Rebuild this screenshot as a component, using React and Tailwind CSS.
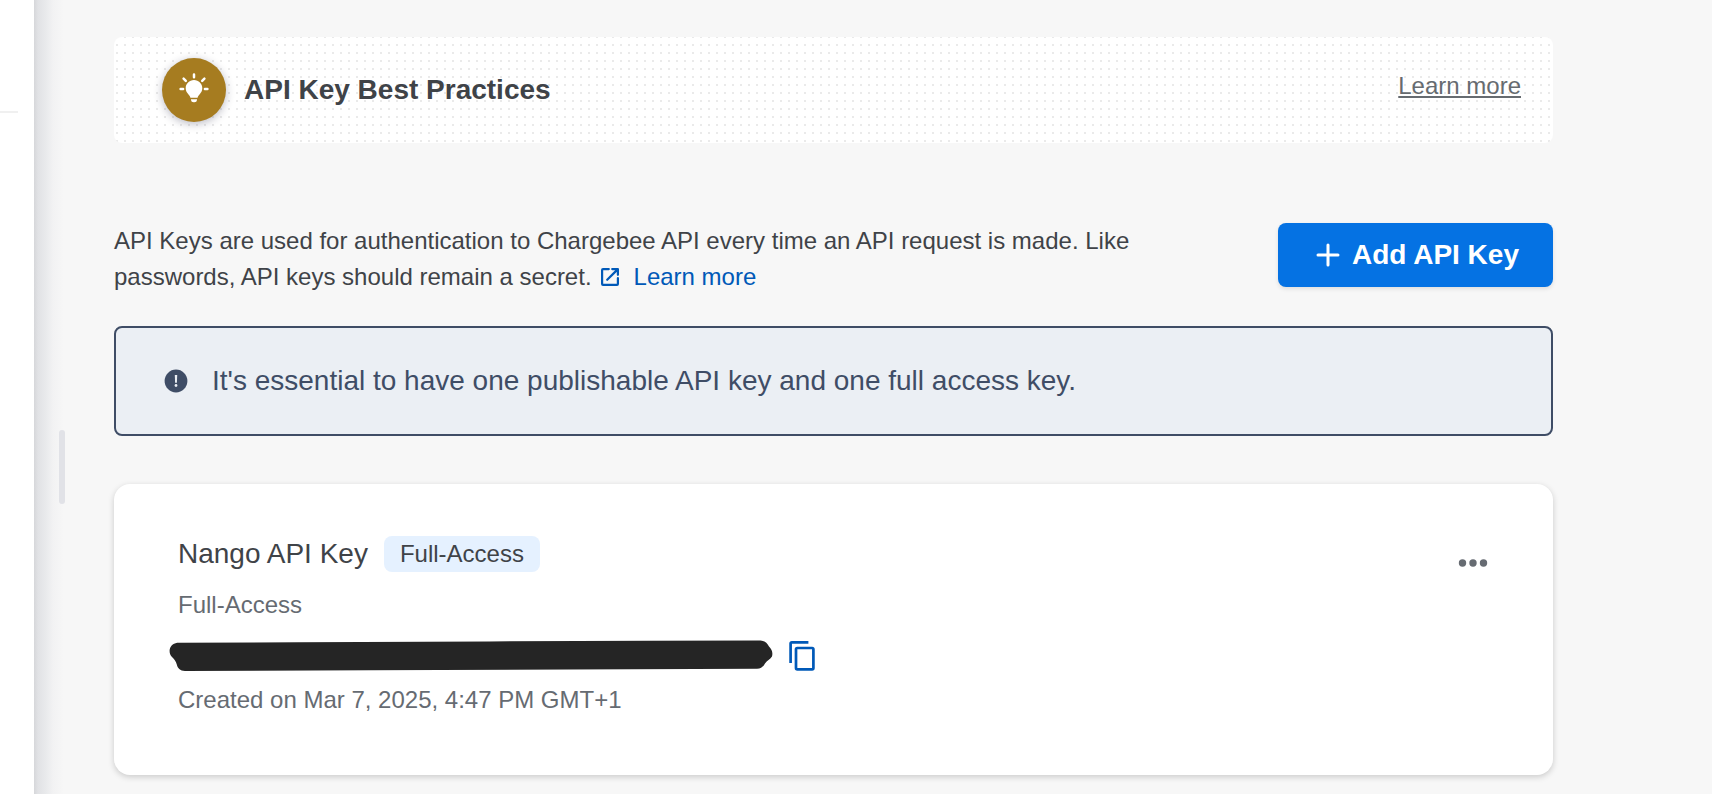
import React from "react";

function BulbIcon() {
  return (
    <svg viewBox="0 0 32 32" className="size-8" aria-hidden="true">
      <g stroke="#fff" strokeWidth="2.5" strokeLinecap="round">
        <path d="M16 2.600v2.600M2.600 17h2.500M26.900 17h2.500M5.600 6.600l2.200 2.200M26.400 6.600l-2.200 2.200" />
      </g>
      <path
        fill="#fff"
        d="M16 8c-4.700 0-8.300 3.700-8.300 8.300 0 2.600 1.200 4.500 2.800 6.100.9.9 1.600 1.900 1.900 3.400h7.200c.3-1.500 1-2.500 1.900-3.400 1.600-1.600 2.800-3.500 2.800-6.100C24.300 11.700 20.700 8 16 8z"
      />
      <path fill="#fff" d="M13 27.200h6v.7a2.600 2.600 0 0 1-2.600 2.400h-.8a2.600 2.600 0 0 1-2.600-2.400z" />
    </svg>
  );
}

function PlusIcon() {
  return (
    <svg viewBox="0 0 32 32" className="size-8" aria-hidden="true">
      <path d="M16 6v20M6 16h20" stroke="#fff" strokeWidth="3" strokeLinecap="round" />
    </svg>
  );
}

function OpenInNewIcon() {
  return (
    <svg
      viewBox="0 0 24 24"
      className="size-6"
      fill="none"
      stroke="currentColor"
      strokeWidth="2.2"
      strokeLinecap="round"
      strokeLinejoin="round"
      aria-hidden="true"
    >
      <path d="M10.800 4.100H5a.9.9 0 0 0-.9.9v14c0 .5.4.9.9.9h14c.5 0 .9-.4.9-.9v-5.800" />
      <path d="M14.200 4.100h5.700v5.700M19.400 4.600 9.200 14.800" />
    </svg>
  );
}

function AlertIcon() {
  return (
    <svg viewBox="0 0 24 24" className="size-6" aria-hidden="true">
      <circle cx="12" cy="12" r="11.400" fill="#3f4d66" />
      <path d="M10.800 6h2.400l-.3 7.700h-1.800z" fill="#ebeff4" />
      <circle cx="12" cy="16.500" r="1.400" fill="#ebeff4" />
    </svg>
  );
}

function CopyIcon() {
  return (
    <svg viewBox="0 0 32 32" className="size-8" fill="none" stroke="currentColor" strokeWidth="2.700" aria-hidden="true">
      <path d="M4.600 23V3.600c0-.8.500-1.300 1.300-1.300h16.500" />
      <rect x="10" y="8" width="17.400" height="21.400" rx="1.300" />
    </svg>
  );
}

function RedactedKey() {
  return (
    <svg viewBox="0 0 604 32" className="h-8 w-[604px]" role="img" aria-label="Hidden API key">
      <path
        d="M10 2.800 L130 2.300 L320 1.400 L480 .7 L590 .4 C596 .6 598 2.500 600 6.500 C603 9.500 604 12.500 603 16.500 C601 19.500 598 20.500 596 23.500 C594 27 592 28.600 588 28.800 L400 29.600 L200 30.300 L16 31 C11 31 8.500 28 7.800 24.500 C7 21 5 19 3 17 C1 15 .3 12.500 .7 9.500 C1.500 5.500 5 2.800 10 2.800z"
        fill="#252525"
      />
    </svg>
  );
}

export default function App() {
  return (
    <div className="flex min-h-screen bg-[#f7f7f7] font-['Liberation_Sans',Arial,sans-serif] text-2xl text-[#3f4348]">
      <aside className="w-[34px] shrink-0 bg-white pt-[111px]">
        <hr className="w-[18px] border-t-2 border-[#f0f0f0]" />
      </aside>
      <div className="w-20 shrink-0 bg-[linear-gradient(to_right,#d6d7da_0px,#e1e2e5_4px,#e9eaec_12px,#f2f2f3_19px,#f7f7f7_30px)] pt-[430px] pl-[25px]">
        <div className="h-[74px] w-1.5 rounded-sm bg-[#e1e2e7]" />
      </div>

      <main className="min-w-0 flex-1 pt-[37px] pr-[159px] pb-[19px]">
        <section className="flex items-center justify-between rounded-lg bg-white bg-[conic-gradient(from_270deg_at_2px_2px,#eaeaea_90deg,transparent_0)] bg-[length:8px_8px] bg-[position:2px_-1px] py-[21px] pr-8 pl-12">
          <div className="flex items-center gap-[18px]">
            <span className="flex size-16 items-center justify-center rounded-full bg-[#a67c20] pb-1 shadow-[0_2px_8px_rgba(30,30,60,0.3)]">
              <BulbIcon />
            </span>
            <h2 className="text-[28px] leading-8 font-bold">API Key Best Practices</h2>
          </div>
          <a href="#best-practices" className="pb-2 leading-8 text-[#666b70] underline">
            Learn more
          </a>
        </section>

        <section className="mt-20 flex items-start justify-between">
          <p className="max-w-[1040px] leading-9">
            API Keys are used for authentication to Chargebee API every time an API request is made. Like passwords, API
            keys should remain a secret.
            <a href="#api-keys" className="ml-1.5 inline-flex items-center gap-3 align-top text-[#0059b8]">
              <OpenInNewIcon />
              Learn more
            </a>
          </p>
          <button
            type="button"
            className="flex h-16 shrink-0 items-center gap-2 rounded-lg bg-[#0572e3] px-[34px] text-[28px] font-bold text-white shadow-[0_2px_4px_rgba(0,0,0,0.1)]"
          >
            <PlusIcon />
            Add API Key
          </button>
        </section>

        <div
          role="alert"
          className="mt-[31px] flex items-center gap-6 rounded-lg border-2 border-[#3f4d66] bg-[#ebeff4] px-12 py-9 text-[28px] leading-[34px] text-[#3f4d66]"
        >
          <AlertIcon />
          <p>It's essential to have one publishable API key and one full access key.</p>
        </div>

        <article className="mt-12 flex items-start justify-between rounded-2xl bg-white pt-[52px] pr-16 pb-[59px] pl-16 shadow-[0_2px_6px_rgba(0,0,0,0.18)]">
          <div className="text-[#666b72]">
            <div className="flex items-center gap-4 text-[#3f4348]">
              <h3 className="text-[28px] leading-9">Nango API Key</h3>
              <span className="rounded-lg bg-[#e5f1ff] px-4 leading-9">Full-Access</span>
            </div>
            <p className="mt-4 leading-[34px]">Full-Access</p>
            <div className="mt-[18px] -ml-[9px] flex items-center gap-[13px]">
              <RedactedKey />
              <button type="button" aria-label="Copy API key" className="text-[#0059b8]">
                <CopyIcon />
              </button>
            </div>
            <p className="mt-3 leading-8">Created on Mar 7, 2025, 4:47 PM GMT+1</p>
          </div>
          <button type="button" aria-label="More actions" className="mt-[19px]">
            <svg viewBox="0 0 32 16" className="h-4 w-8" fill="#666b72" aria-hidden="true">
              <circle cx="5.500" cy="8" r="3.700" />
              <circle cx="16" cy="8" r="3.700" />
              <circle cx="26.500" cy="8" r="3.700" />
            </svg>
          </button>
        </article>
      </main>
    </div>
  );
}
